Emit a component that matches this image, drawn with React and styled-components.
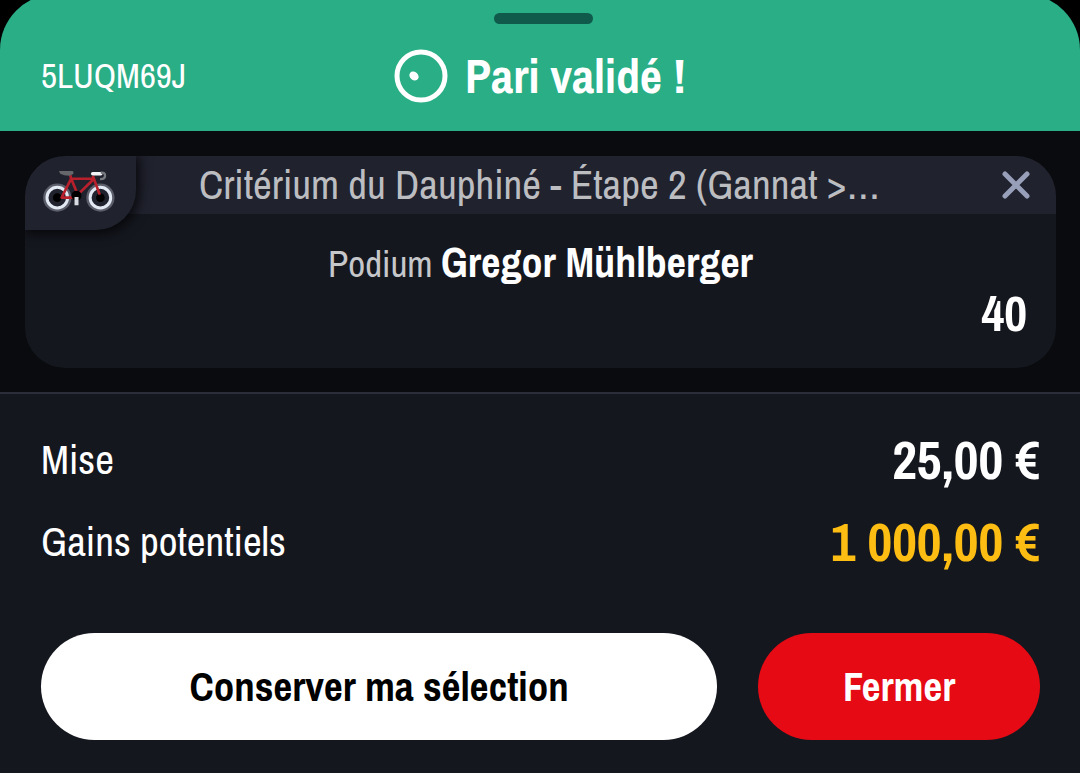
import React from 'react';
import styled, { createGlobalStyle } from 'styled-components';

const bet = {
  code: '5LUQM69J',
  event: 'Critérium du Dauphiné - Étape 2 (Gannat >…',
  market: 'Podium',
  pick: 'Gregor Mühlberger',
  odds: '40',
};

const totals = [
  { label: 'Mise', value: '25,00 €' },
  { label: 'Gains potentiels', value: '1 000,00 €', highlight: true },
];

const BikeIcon = () => (
  <svg width="73" height="45" viewBox="95 85 220 135" fill="none" aria-hidden="true">
    <g>
      <circle cx="141" cy="174" r="37" stroke="#5c5f6b" strokeWidth="11" />
      <circle cx="271" cy="174" r="37" stroke="#5c5f6b" strokeWidth="11" />
      <circle cx="141" cy="174" r="31" stroke="#e3e9f3" strokeWidth="9" />
      <circle cx="271" cy="174" r="31" stroke="#e3e9f3" strokeWidth="9" />
      <circle cx="141" cy="174" r="13" fill="#000" />
      <circle cx="271" cy="174" r="13" fill="#000" />
    </g>
    <path
      d="M180 106L183 117M183 117L154 174H190M183 117H250M183 117L203 165L252 117M248 108L269 165"
      stroke="#b8202c"
      strokeWidth="8"
      strokeLinejoin="round"
    />
    <path d="M146 94H186Q192 95 189 103L178 108Q160 108 150 102Z" fill="#66676b" />
    <path d="M248 102H272" stroke="#f2f4f8" strokeWidth="11" strokeLinecap="round" />
    <path d="M272 99Q286 97 285 109Q284 119 270 118" stroke="#777a80" strokeWidth="7" />
    <circle cx="199" cy="168" r="15" fill="#000" />
    <path d="M199 172V197" stroke="#d9dde3" strokeWidth="12" />
  </svg>
);

const App = () => {
  return (
    <>
      <GlobalStyle />
      <Sheet>
        <Header>
          <Handle />
          <Code>{bet.code}</Code>
          <Title>
            <svg width="54" height="54" viewBox="0 0 54 54" fill="none" aria-hidden="true">
              <circle cx="27" cy="27" r="24" stroke="#fff" strokeWidth="5" />
              <ellipse cx="20" cy="27" rx="5" ry="4" fill="#fff" transform="rotate(38 20 27)" />
            </svg>
            Pari validé !
          </Title>
        </Header>

        <Selections>
          <Card>
            <SportBadge>
              <BikeIcon />
            </SportBadge>
            <CardHeader>
              <EventName>{bet.event}</EventName>
              <RemoveButton type="button" aria-label="Supprimer">
                <svg width="28" height="28" viewBox="0 0 28 28" aria-hidden="true">
                  <path
                    d="M3 3L25 25M25 3L3 25"
                    stroke="#989fb9"
                    strokeWidth="5"
                    strokeLinecap="round"
                  />
                </svg>
              </RemoveButton>
            </CardHeader>
            <CardBody>
              <Pick>
                {bet.market} <strong>{bet.pick}</strong>
              </Pick>
              <Odds>{bet.odds}</Odds>
            </CardBody>
          </Card>
        </Selections>

        <Footer>
          <Totals>
            {totals.map(({ label, value, highlight }) => (
              <TotalRow key={label}>
                <dt>{label}</dt>
                <Amount $highlight={highlight}>{value}</Amount>
              </TotalRow>
            ))}
          </Totals>
          <Actions>
            <Button type="button" $grow={12}>
              Conserver ma sélection
            </Button>
            <Button type="button" $grow={5} $primary>
              Fermer
            </Button>
          </Actions>
        </Footer>
      </Sheet>
    </>
  );
};

export default App;

const GlobalStyle = createGlobalStyle`
  * {
    box-sizing: border-box;
  }
  body {
    margin: 0;
    background: #000;
    color: #fff;
    font-family: 'Archivo Narrow', 'Liberation Sans Narrow', 'Liberation Sans', sans-serif;
  }
  #root {
    display: flow-root;
  }
  button {
    font-family: inherit;
    cursor: pointer;
  }
`;

const Sheet = styled.main`
  margin-top: -6px;
  min-height: calc(100vh + 6px);
  border-radius: 56px 56px 0 0;
  overflow: hidden;
  background: #15171f;
`;

const Header = styled.header`
  position: relative;
  display: grid;
  grid-template-columns: 1fr auto 1fr;
  align-items: center;
  padding: 52px 41px 25px;
  height: 137px;
  background: #29ae86;
`;

const Handle = styled.span`
  position: absolute;
  top: 19px;
  left: 50%;
  width: 99px;
  height: 11px;
  margin-left: -46px;
  border-radius: 6px;
  background: #0f5a4b;
`;

const Code = styled.span`
  font-size: 35px;
  line-height: 40px;
`;

const Title = styled.h1`
  display: flex;
  align-items: center;
  gap: 17px;
  margin: 0;
  font-size: 48px;
  line-height: 56px;
  font-weight: bold;
`;

const Selections = styled.section`
  padding: 25px 24px 24px 25px;
  background: #0a0b0e;
  border-bottom: 2px solid #2b2e38;
`;

const Card = styled.article`
  position: relative;
  border-radius: 40px;
  overflow: hidden;
  background: #15171f;
`;

const SportBadge = styled.div`
  position: absolute;
  top: 0;
  left: 0;
  padding: 12px 21px 17px 17px;
  border-radius: 40px 0;
  background: #20222e;
  box-shadow: 2px 2px 12px 2px rgba(0, 0, 0, 0.7);
  svg {
    display: block;
  }
`;

const CardHeader = styled.div`
  display: flex;
  align-items: center;
  height: 58px;
  padding: 0 26px 0 52px;
  background: #20222e;
`;

const EventName = styled.h2`
  flex: 1;
  margin: 0;
  font-size: 41px;
  line-height: 48px;
  font-weight: normal;
  text-align: center;
  white-space: nowrap;
  color: #bcbdc0;
`;

const RemoveButton = styled.button`
  display: flex;
  padding: 0;
  border: none;
  background: none;
`;

const CardBody = styled.div`
  padding: 24px 29px 30px;
`;

const Pick = styled.p`
  margin: 0;
  font-size: 37px;
  line-height: 48px;
  text-align: center;
  color: #c6c7ca;
  strong {
    font-size: 42px;
    color: #fff;
  }
`;

const Odds = styled.p`
  margin: 0;
  font-size: 50px;
  line-height: 50px;
  font-weight: bold;
  text-align: right;
`;

const Footer = styled.footer`
  padding: 24px 40px 33px 41px;
`;

const Totals = styled.dl`
  margin: 0;
`;

const TotalRow = styled.div`
  display: flex;
  justify-content: space-between;
  align-items: center;
  height: 82px;
  font-size: 41px;
`;

const Amount = styled.dd`
  margin: 0;
  font-size: 54px;
  font-weight: bold;
  color: ${({ $highlight }) => ($highlight ? '#fdbd12' : '#fff')};
`;

const Actions = styled.div`
  display: flex;
  gap: 41px;
  margin-top: 51px;
`;

const Button = styled.button`
  flex: ${({ $grow }) => $grow} 1 0;
  height: 107px;
  padding: 0;
  border: none;
  border-radius: 54px;
  font-size: 41px;
  font-weight: bold;
  color: ${({ $primary }) => ($primary ? '#fff' : '#000')};
  background: ${({ $primary }) => ($primary ? '#e50a14' : '#fff')};
`;
